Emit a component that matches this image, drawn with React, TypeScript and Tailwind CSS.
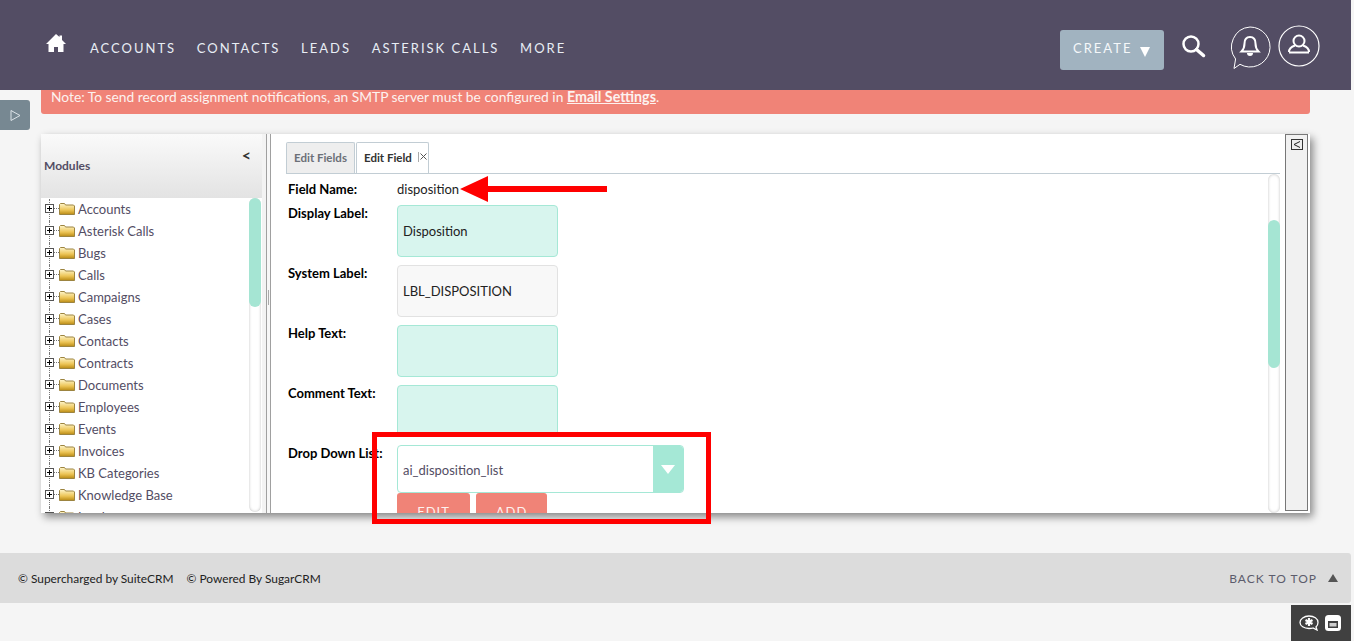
const modules = [
  "Accounts",
  "Asterisk Calls",
  "Bugs",
  "Calls",
  "Campaigns",
  "Cases",
  "Contacts",
  "Contracts",
  "Documents",
  "Employees",
  "Events",
  "Invoices",
  "KB Categories",
  "Knowledge Base",
  "Leads",
];

const navItems = ["ACCOUNTS", "CONTACTS", "LEADS", "ASTERISK CALLS", "MORE"];

const Folder = () => (
  <svg width="16" height="12" viewBox="0 0 16 12" className="mb-[3px] shrink-0">
    <defs>
      <linearGradient id="folderFill" x1="0" y1="0" x2="0" y2="1">
        <stop offset="0" stopColor="#fff6cc" />
        <stop offset="0.6" stopColor="#ecc455" />
        <stop offset="1" stopColor="#b98a14" />
      </linearGradient>
    </defs>
    <path d="M.5 11.500V1.500l1-1h4l1 1.500h8l1 1v8.500z" fill="url(#folderFill)" stroke="#9c8440" />
  </svg>
);

const Expander = () => (
  <span className="relative z-[1] mb-[3px] flex h-[9px] w-[9px] shrink-0 items-center justify-center border border-[#555] bg-white">
    <svg width="7" height="7" viewBox="0 0 7 7">
      <path d="M1 3.500h5M3.500 1v5" stroke="#000" strokeWidth="1" />
    </svg>
  </span>
);

const FieldRow = ({ label, value, tone }: { label: string; value?: string; tone: "green" | "gray" }) => (
  <div className="flex h-[60px] shrink-0">
    <div className="w-[109px] text-[13px] leading-[16px] font-bold text-black">{label}</div>
    <div
      className={
        tone === "green"
          ? "flex h-[52px] w-[161px] items-center rounded border border-[#a5e8d6] bg-[#d8f5ee] px-[5px] pt-[2px] text-[13px] text-[#222]"
          : "flex h-[52px] w-[161px] items-center rounded border border-[#e2e2e2] bg-[#f8f8f8] px-[5px] pt-[2px] text-[13px] text-[#222]"
      }
    >
      {value}
    </div>
  </div>
);

export default function App() {
  return (
    <div className="h-[641px] w-[1354px] overflow-hidden bg-[#f5f5f5] font-['Lato','Open_Sans',sans-serif]">
      <div className="relative h-[641px] w-[1351px] bg-[#f5f5f5]">
        <header className="relative z-10 flex h-[90px] items-center bg-[#534d64] pt-[4px] pr-[31px] pl-[46px]">
          <svg width="20" height="18" viewBox="0 0 20 18" className="mb-[8px] shrink-0">
            <path d="M10 0l3.500 3V1.500H16V6l4 4h-2.500v8H12v-5H8v5H2.500v-8H0z" fill="#fff" />
          </svg>
          <nav className="mt-[4px] ml-[24px] flex gap-[20.7px] text-[13px] tracking-[2px] text-[#e8edf5]">
            {navItems.map((item) => (
              <span key={item}>{item}</span>
            ))}
          </nav>
          <button className="mt-[5px] ml-auto flex h-[40px] w-[104px] items-center rounded-[3px] bg-[#a1b3c0] pb-[2px] pl-[13px] text-[13px] tracking-[2px] text-[#f5f8fa]">
            CREATE
            <svg width="10" height="10" viewBox="0 0 10 10" className="mt-[6px] ml-[8px]">
              <path d="M0 0h10L5 10z" fill="#fff" />
            </svg>
          </button>
          <svg width="26" height="26" viewBox="0 0 26 26" className="ml-[17px]">
            <circle cx="10" cy="10" r="7.500" fill="none" stroke="#fff" strokeWidth="2.500" />
            <path d="M15.500 15.500l7 6" stroke="#fff" strokeWidth="3.500" strokeLinecap="round" />
          </svg>
          <svg width="42" height="46" viewBox="0 0 42 46" className="mt-[4px] ml-[22px]">
            <path
              d="M21 1a20 20 0 1 1-10 37.300l-6 4.200 1.600-9.500A20 20 0 0 1 21 1z"
              fill="none"
              stroke="#fff"
              strokeWidth="1"
            />
            <path d="M21 11c-4 0-5.500 3-5.500 6.500 0 4-1 6-3 8h17c-2-2-3-4-3-8 0-3.500-1.500-6.500-5.500-6.500z" fill="none" stroke="#fff" strokeWidth="2" />
            <path d="M18 27h6a3 3 0 0 1-6 0z" fill="#fff" />
          </svg>
          <svg width="42" height="42" viewBox="0 0 42 42" className="mt-[-3px] ml-[7px]">
            <circle cx="21" cy="21" r="20" fill="none" stroke="#fff" strokeWidth="1.200" />
            <circle cx="21" cy="16" r="5.500" fill="none" stroke="#fff" strokeWidth="2" />
            <path d="M11 27c0-4 3-5.500 6-6.500M31 27c0-4-3-5.500-6-6.500M11 27.500h20" fill="none" stroke="#fff" strokeWidth="2" />
          </svg>
        </header>

        <div className="mx-[41px] flex h-[24px] w-[1269px] items-start rounded-b-[3px] bg-[#f08377] pl-[10px] text-[13.8px] leading-[14px] text-[#fdf2ef]">
          <span>
            Note: To send record assignment notifications, an SMTP server must be configured in{" "}
            <span className="text-[14.3px] font-bold underline">Email Settings</span>.
          </span>
        </div>

        <button className="absolute top-[100px] left-0 flex h-[30px] w-[30px] items-center justify-center rounded-r-[3px] bg-[#778892]">
          <svg width="13" height="13" viewBox="0 0 13 13">
            <path d="M2 1.500l9 5-9 5z" fill="none" stroke="#dde4e8" strokeWidth="1" />
          </svg>
        </button>

        <main className="mx-[41px] mt-[20px] flex h-[379px] w-[1269px] bg-white shadow-[3px_4px_8px_rgba(0,0,0,0.45)]">
          <aside className="flex w-[221px] shrink-0 flex-col">
            <div className="relative flex h-[64px] shrink-0 items-center bg-gradient-to-b from-[#fafafa] to-[#e3e3e3] pl-[3px] text-[12px] font-bold text-[#534d64]">
              Modules
              <span className="absolute top-[9px] right-[11px] text-[16px] font-bold text-[#333]">&lt;</span>
            </div>
            <div className="relative flex-1 overflow-hidden pl-[4px]">
              <ul className="mt-[1px]">
                {modules.map((name) => (
                  <li key={name} className="relative flex h-[22px] items-center text-[13px] text-[#534d64]">
                    <span className="absolute top-0 bottom-0 left-[4px] border-l border-dotted border-[#777]" />
                    <Expander />
                    <span className="mb-[3px] h-0 w-[5px] shrink-0 border-t border-dotted border-[#777]" />
                    <Folder />
                    <span className="ml-[3px]">{name}</span>
                  </li>
                ))}
              </ul>
              <div className="absolute top-0 right-[1px] bottom-[1px] w-[12px] rounded-full bg-white shadow-[inset_0_0_3px_rgba(0,0,0,0.25)]">
                <div className="h-[109px] w-[12px] rounded-full bg-[#a5e5d3]" />
              </div>
            </div>
          </aside>

          <div className="w-[4px] shrink-0 bg-[#f3f3f3]" />
          <div className="flex w-[5px] shrink-0 items-center justify-center border-x border-[#a0a0a0] bg-[#f7f7f7]">
            <span className="mb-[52px] h-[15px] w-[1px] bg-[#aaa]" />
          </div>

          <section className="relative flex min-w-0 flex-1 flex-col overflow-hidden pl-[15px]">
            <div className="mr-[5px] flex h-[40px] shrink-0 items-end gap-[1px] border-b border-[#c2cdd4]">
              <div className="flex h-[31px] w-[69px] items-center justify-center rounded-t-[2px] border border-b-0 border-[#c2cdd4] bg-[#eeeeee] text-[11.5px] font-bold whitespace-nowrap text-[#6b7078]">
                Edit Fields
              </div>
              <div className="flex h-[31px] w-[73px] items-center rounded-t-[2px] border border-b-0 border-[#c2cdd4] bg-white pl-[7px] text-[11.5px] font-bold whitespace-nowrap text-[#333]">
                Edit Field
                <svg width="10" height="10" viewBox="0 0 10 10" className="mb-[3px] ml-[6px] shrink-0">
                  <path d="M.5 0v10" stroke="#aaa" strokeWidth="1" />
                  <path d="M2.500 1.500l6 6M8.500 1.500l-6 6" stroke="#555" strokeWidth="1" />
                </svg>
              </div>
            </div>

            <div className="flex h-[31px] shrink-0 items-start pt-[7px] pl-[2px] text-[13px] leading-[16px]">
              <div className="w-[109px] font-bold text-black">Field Name:</div>
              <div className="text-[#222]">disposition</div>
            </div>

            <div className="pl-[2px]">
              <FieldRow label="Display Label:" value="Disposition" tone="green" />
              <FieldRow label="System Label:" value="LBL_DISPOSITION" tone="gray" />
              <FieldRow label="Help Text:" tone="green" />
              <FieldRow label="Comment Text:" tone="green" />

              <div className="flex">
                <div className="w-[109px] text-[13px] leading-[16px] font-bold text-black">Drop Down List:</div>
                <div>
                  <div className="flex h-[48px] w-[287px] items-center overflow-hidden rounded border border-[#a5e8d6] bg-white pl-[5px] text-[13px] text-[#534d64]">
                    <span className="flex-1 pt-[3px]">ai_disposition_list</span>
                    <span className="flex h-[48px] w-[30px] items-center justify-center bg-[#a5e8d6]">
                      <svg width="14" height="9" viewBox="0 0 14 9">
                        <path d="M0 0h14L7 9z" fill="#fff" />
                      </svg>
                    </span>
                  </div>
                  <div className="flex gap-[6px]">
                    <span className="flex h-[40px] w-[73px] items-center justify-center rounded-[3px] bg-[#f08377] text-[13px] tracking-[1px] text-[#fdf2ef]">
                      EDIT
                    </span>
                    <span className="flex h-[40px] w-[71px] items-center justify-center rounded-[3px] bg-[#f08377] text-[13px] tracking-[1px] text-[#fdf2ef]">
                      ADD
                    </span>
                  </div>
                </div>
              </div>
            </div>

            <div className="absolute top-[40px] right-[5px] bottom-0 w-[12px] rounded-full bg-white shadow-[inset_0_0_3px_rgba(0,0,0,0.25)]">
              <div className="mt-[46px] h-[148px] w-[12px] rounded-full bg-[#a5e5d3]" />
            </div>
          </section>

          <div className="w-[25px] shrink-0 pr-[2px] pb-[2px]">
            <aside className="h-full border border-[#777] bg-[#f1f1f1] pt-[4px] pl-[5px]">
              <span className="flex h-[11px] w-[12px] items-center justify-center border border-[#333] bg-[#eee]">
                <svg width="8" height="7" viewBox="0 0 8 7">
                  <path d="M7 .500L1 3.500l6 3" fill="none" stroke="#222" strokeWidth="1" />
                </svg>
              </span>
            </aside>
          </div>
        </main>

        <footer className="mt-[40px] flex h-[50px] items-center rounded-r-[3px] bg-[#dcdcdc] pt-[2px] pr-[13px] pl-[18px] text-[11.9px] text-[#222]">
          <span>© Supercharged by SuiteCRM</span>
          <span className="ml-[13px]">© Powered By SugarCRM</span>
          <span className="ml-auto text-[12px] tracking-[1px] text-[#5c5c6c]">BACK TO TOP</span>
          <svg width="10" height="8" viewBox="0 0 10 8" className="mb-[2px] ml-[11px]">
            <path d="M5 0l5 8H0z" fill="#555" />
          </svg>
        </footer>

        <div className="absolute right-0 bottom-0 flex h-[36px] w-[60px] items-center gap-[6px] bg-[#404040] pl-[8px]">
          <svg width="20" height="16" viewBox="0 0 20 16">
            <path d="M10 1c5 0 9 2.500 9 6.500 0 2-1 3.500-2 4.500l1 3-4-2c-1 .300-2.500.500-4 .500-5 0-9-2.500-9-6s4-6.500 9-6.500z" fill="none" stroke="#fff" strokeWidth="1.300" />
            <path d="M10 3v8M6.500 5l7 4M13.500 5l-7 4" stroke="#fff" strokeWidth="2.200" />
          </svg>
          <svg width="16" height="16" viewBox="0 0 16 16">
            <rect width="16" height="16" rx="3.500" fill="#fff" />
            <rect x="3" y="6" width="10" height="7" fill="#404040" />
            <rect x="4.500" y="8" width="7" height="3.500" fill="#cfcfcf" />
          </svg>
        </div>

        {/* red annotations drawn on top of the screenshot */}
        <svg width="150" height="30" viewBox="0 0 150 30" className="absolute top-[175px] left-[460px]">
          <path d="M0 14L28 1v10h119v6H28v10z" fill="#f00" />
        </svg>
        <div className="absolute top-[432px] left-[372px] h-[92px] w-[339px] border-[5px] border-[#f00]" />
      </div>
    </div>
  );
}
